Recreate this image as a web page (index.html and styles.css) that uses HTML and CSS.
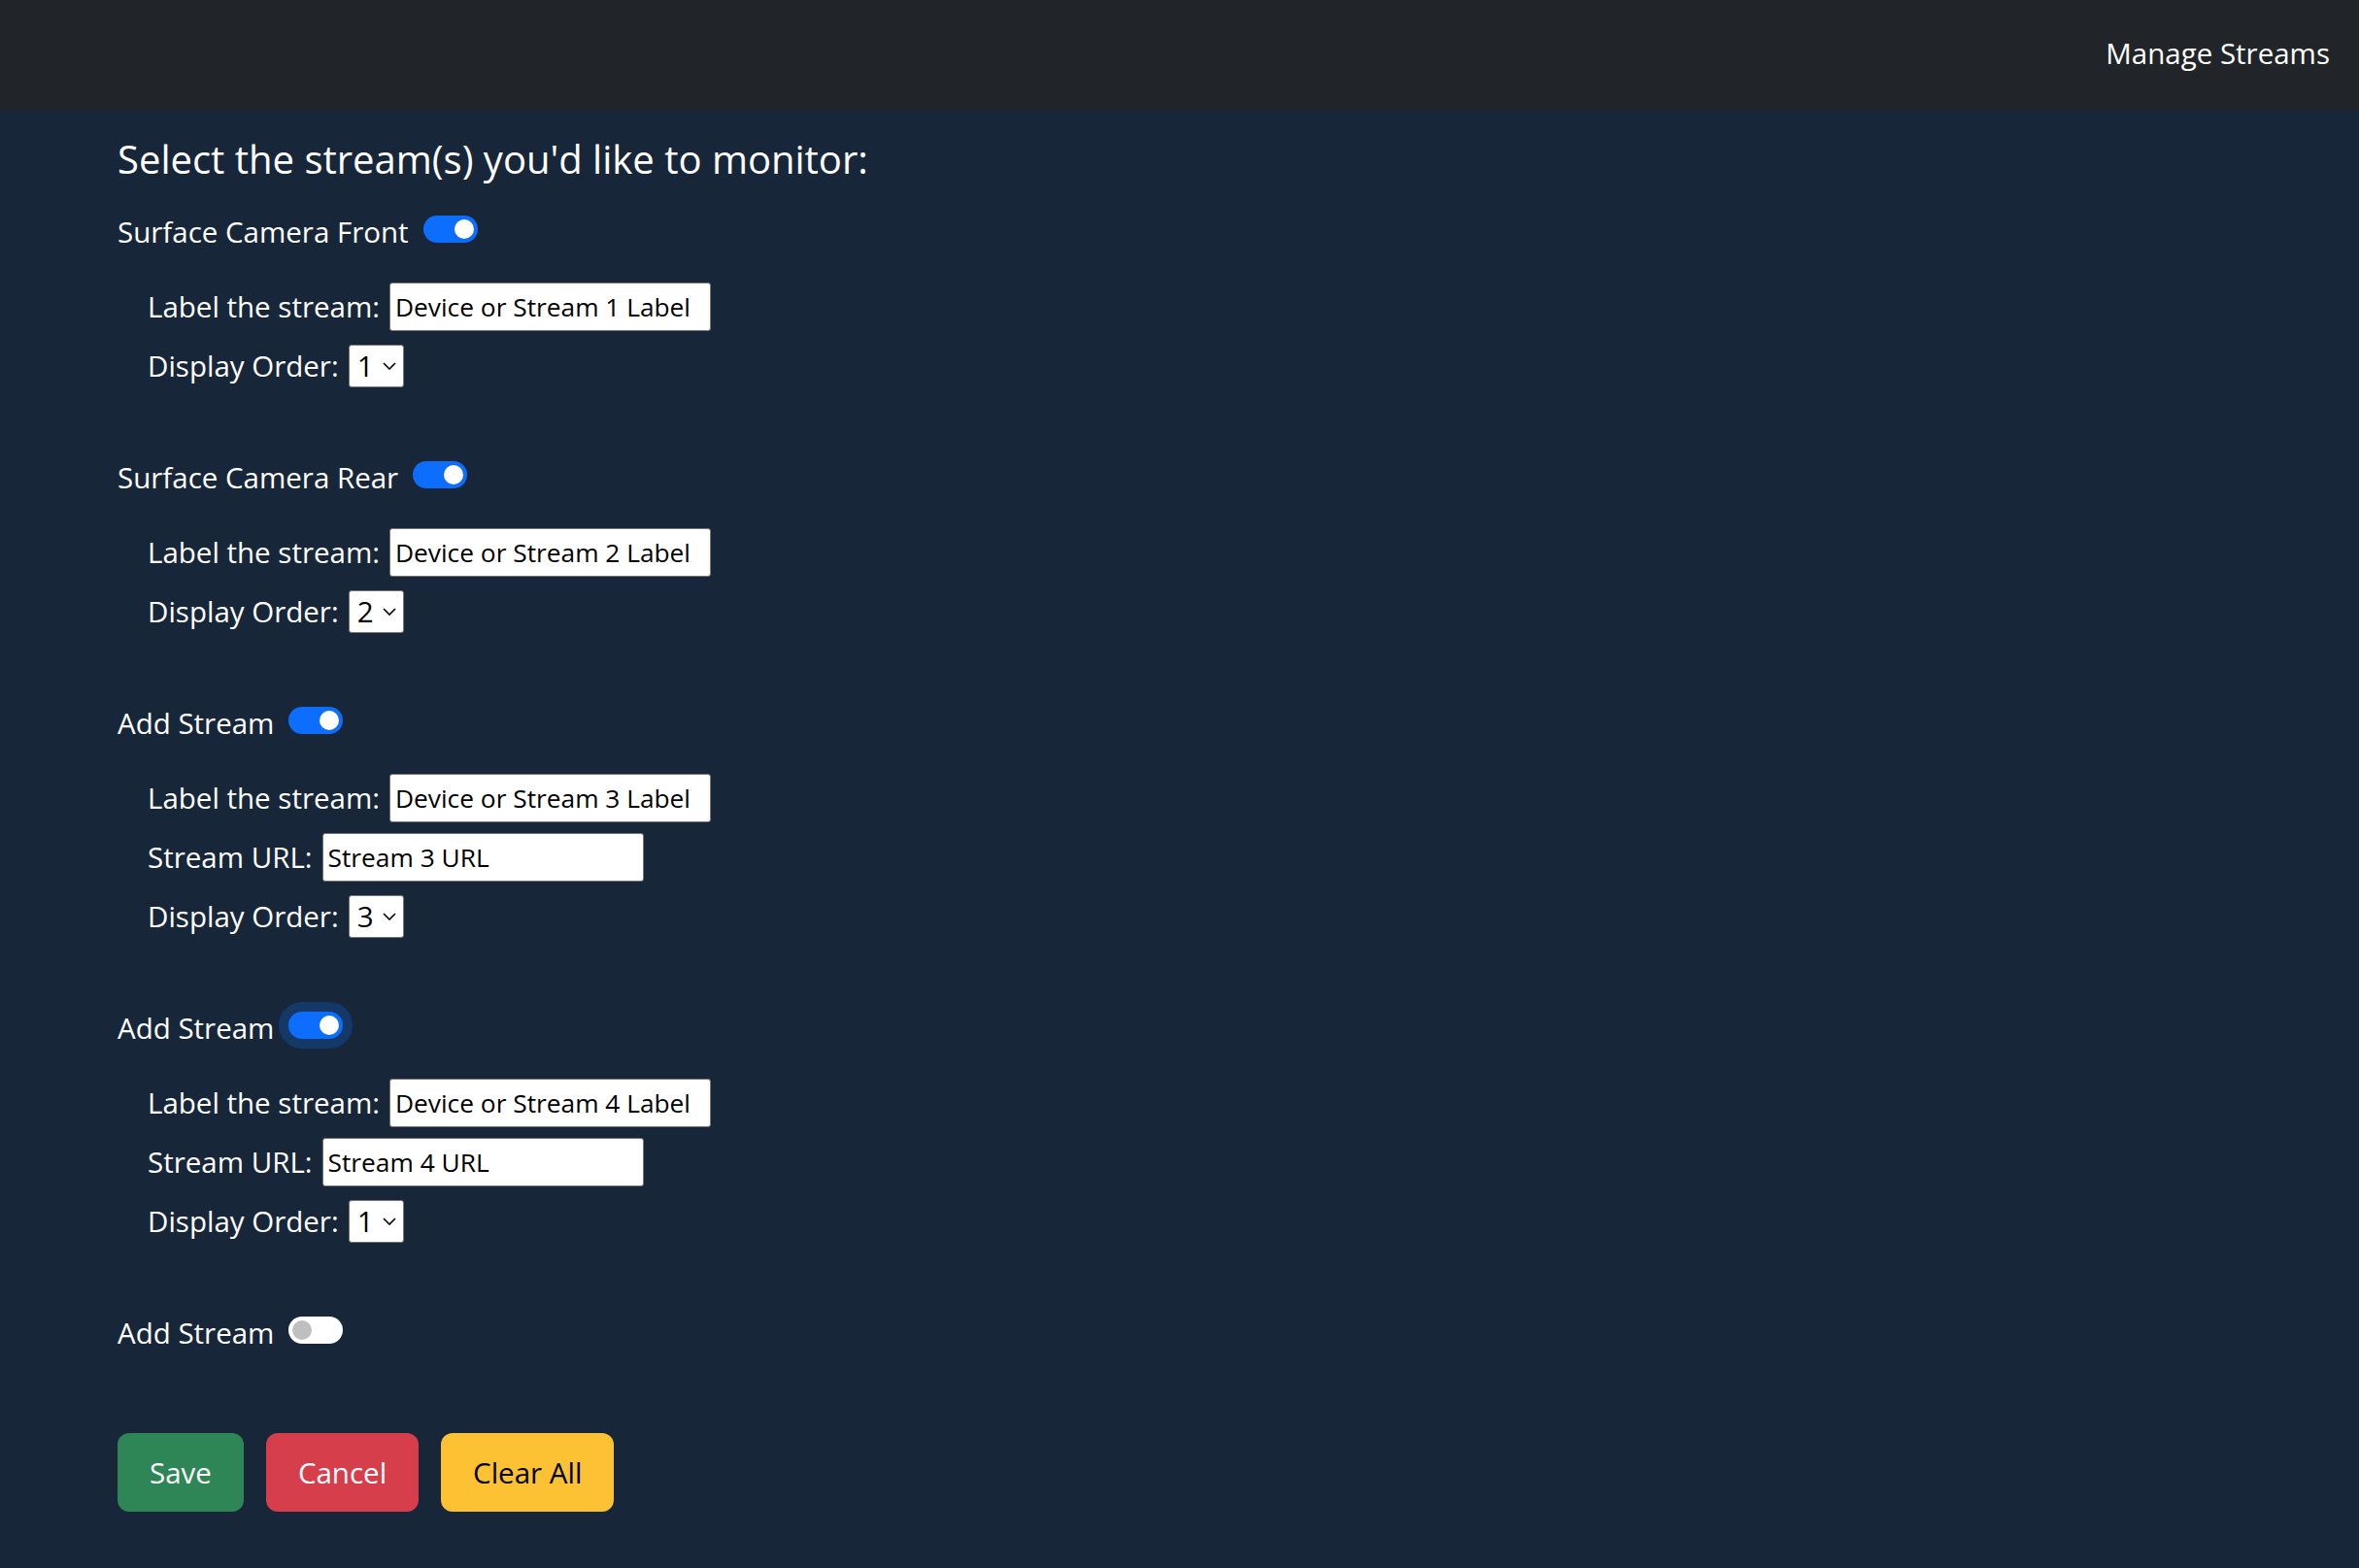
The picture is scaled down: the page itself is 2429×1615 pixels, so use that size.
FILE: index.html
```html
<!DOCTYPE html>
<html lang="en">
<head>
<meta charset="utf-8">
<title>Manage Streams</title>
<link rel="stylesheet" href="styles.css">
</head>
<body>
<nav class="navbar">
  <a class="nav-link" href="#">Manage Streams</a>
</nav>
<main class="content">
  <h1 class="title">Select the stream(s) you'd like to monitor:</h1>
  <form class="streams">
    <section class="stream">
      <div class="stream-head">
        <span class="stream-name">Surface Camera Front</span>
        <span class="switch on"><span class="knob"></span></span>
      </div>
      <div class="fields">
        <div class="field"><label>Label the stream:</label><input class="text-input" type="text" value="Device or Stream 1 Label"></div>
        <div class="field"><label>Display Order:</label><span class="select-wrap"><select class="order"><option>1</option></select><svg class="chev" viewBox="0 0 14 8" width="14" height="8"><path d="M1 1 L7 7 L13 1" fill="none" stroke="#000" stroke-width="1.6"/></svg></span></div>
      </div>
    </section>
    <section class="stream">
      <div class="stream-head">
        <span class="stream-name">Surface Camera Rear</span>
        <span class="switch on"><span class="knob"></span></span>
      </div>
      <div class="fields">
        <div class="field"><label>Label the stream:</label><input class="text-input" type="text" value="Device or Stream 2 Label"></div>
        <div class="field"><label>Display Order:</label><span class="select-wrap"><select class="order"><option>2</option></select><svg class="chev" viewBox="0 0 14 8" width="14" height="8"><path d="M1 1 L7 7 L13 1" fill="none" stroke="#000" stroke-width="1.6"/></svg></span></div>
      </div>
    </section>
    <section class="stream">
      <div class="stream-head">
        <span class="stream-name">Add Stream</span>
        <span class="switch on"><span class="knob"></span></span>
      </div>
      <div class="fields">
        <div class="field"><label>Label the stream:</label><input class="text-input" type="text" value="Device or Stream 3 Label"></div>
        <div class="field"><label>Stream URL:</label><input class="text-input" type="text" value="Stream 3 URL"></div>
        <div class="field"><label>Display Order:</label><span class="select-wrap"><select class="order"><option>3</option></select><svg class="chev" viewBox="0 0 14 8" width="14" height="8"><path d="M1 1 L7 7 L13 1" fill="none" stroke="#000" stroke-width="1.6"/></svg></span></div>
      </div>
    </section>
    <section class="stream">
      <div class="stream-head">
        <span class="stream-name">Add Stream</span>
        <span class="switch on focus"><span class="knob"></span></span>
      </div>
      <div class="fields">
        <div class="field"><label>Label the stream:</label><input class="text-input" type="text" value="Device or Stream 4 Label"></div>
        <div class="field"><label>Stream URL:</label><input class="text-input" type="text" value="Stream 4 URL"></div>
        <div class="field"><label>Display Order:</label><span class="select-wrap"><select class="order"><option>1</option></select><svg class="chev" viewBox="0 0 14 8" width="14" height="8"><path d="M1 1 L7 7 L13 1" fill="none" stroke="#000" stroke-width="1.6"/></svg></span></div>
      </div>
    </section>
    <section class="stream">
      <div class="stream-head">
        <span class="stream-name">Add Stream</span>
        <span class="switch off"><span class="knob"></span></span>
      </div>
    </section>
  </form>
  <div class="actions">
    <button class="btn btn-save" type="button">Save</button>
    <button class="btn btn-cancel" type="button">Cancel</button>
    <button class="btn btn-clear" type="button">Clear All</button>
  </div>
</main>
</body>
</html>
```

FILE: styles.css
```css
* { box-sizing: border-box; }

html, body {
  margin: 0;
  padding: 0;
}

body {
  background: #172739;
  color: #fff;
  font-family: "Open Sans", "Noto Sans", sans-serif;
  font-size: 29.5px;
  min-height: 1615px;
}

.navbar {
  height: 113px;
  background: #212529;
  display: flex;
  justify-content: flex-end;
  align-items: center;
  padding-right: 30px;
}

.nav-link {
  color: #fff;
  text-decoration: none;
  font-size: 29.5px;
  line-height: 36px;
  margin-top: -4px;
}

.content {
  padding: 27px 0 0 121px;
}

.title {
  margin: 0;
  font-size: 40px;
  font-weight: 400;
  line-height: 48px;
}

.streams {
  margin: 33px 0 0 0;
  display: flex;
  flex-direction: column;
  gap: 72px;
}

.stream-head {
  display: flex;
  align-items: flex-start;
  gap: 15px;
  height: 36px;
}

.stream-name {
  line-height: 36px;
}

.switch {
  position: relative;
  width: 56px;
  height: 28px;
  border-radius: 14px;
  margin-top: 1px;
  flex: none;
}

.switch.on {
  background: #0d6efd;
}

.switch.off {
  background: #fff;
}

.switch.focus {
  box-shadow: 0 0 0 10px rgba(13, 110, 253, 0.25);
}

.knob {
  position: absolute;
  top: 4px;
  width: 20px;
  height: 20px;
  border-radius: 50%;
}

.switch.on .knob {
  right: 4px;
  background: #fff;
}

.switch.off .knob {
  left: 4px;
  background: #bfbfbf;
}

.fields {
  margin-top: 34px;
  padding-left: 31px;
  display: flex;
  flex-direction: column;
  gap: 11px;
}

.field {
  display: flex;
  align-items: center;
  height: 50px;
  gap: 10px;
}

.field label {
  line-height: 36px;
  white-space: nowrap;
}

.text-input {
  width: 331px;
  height: 50px;
  margin: 0;
  padding: 0 5px;
  border: 1px solid #767676;
  border-radius: 3px;
  background: #fff;
  color: #000;
  font-family: "Open Sans", "Noto Sans", sans-serif;
  font-size: 26.3px;
  outline: none;
}

.select-wrap {
  position: relative;
  display: inline-block;
  width: 57px;
  height: 44px;
}

.order {
  appearance: none;
  -webkit-appearance: none;
  width: 57px;
  height: 44px;
  margin: 0;
  padding: 0 0 0 8px;
  border: 1px solid #767676;
  border-radius: 3px;
  background: #fff;
  color: #000;
  font-family: "Open Sans", "Noto Sans", sans-serif;
  font-size: 29.5px;
  line-height: 42px;
}

.chev {
  position: absolute;
  left: 35px;
  top: 18px;
  pointer-events: none;
}

.actions {
  margin-top: 85px;
  display: flex;
  gap: 23px;
}

.btn {
  height: 81px;
  padding: 0 33px;
  border: none;
  border-radius: 12px;
  font-family: "Open Sans", "Noto Sans", sans-serif;
  font-size: 29.5px;
  line-height: 40px;
  cursor: pointer;
}

.btn-save {
  background: #2e8657;
  color: #fff;
}

.btn-cancel {
  background: #d63e4c;
  color: #fff;
}

.btn-clear {
  background: #fdc134;
  color: #000;
}
```
